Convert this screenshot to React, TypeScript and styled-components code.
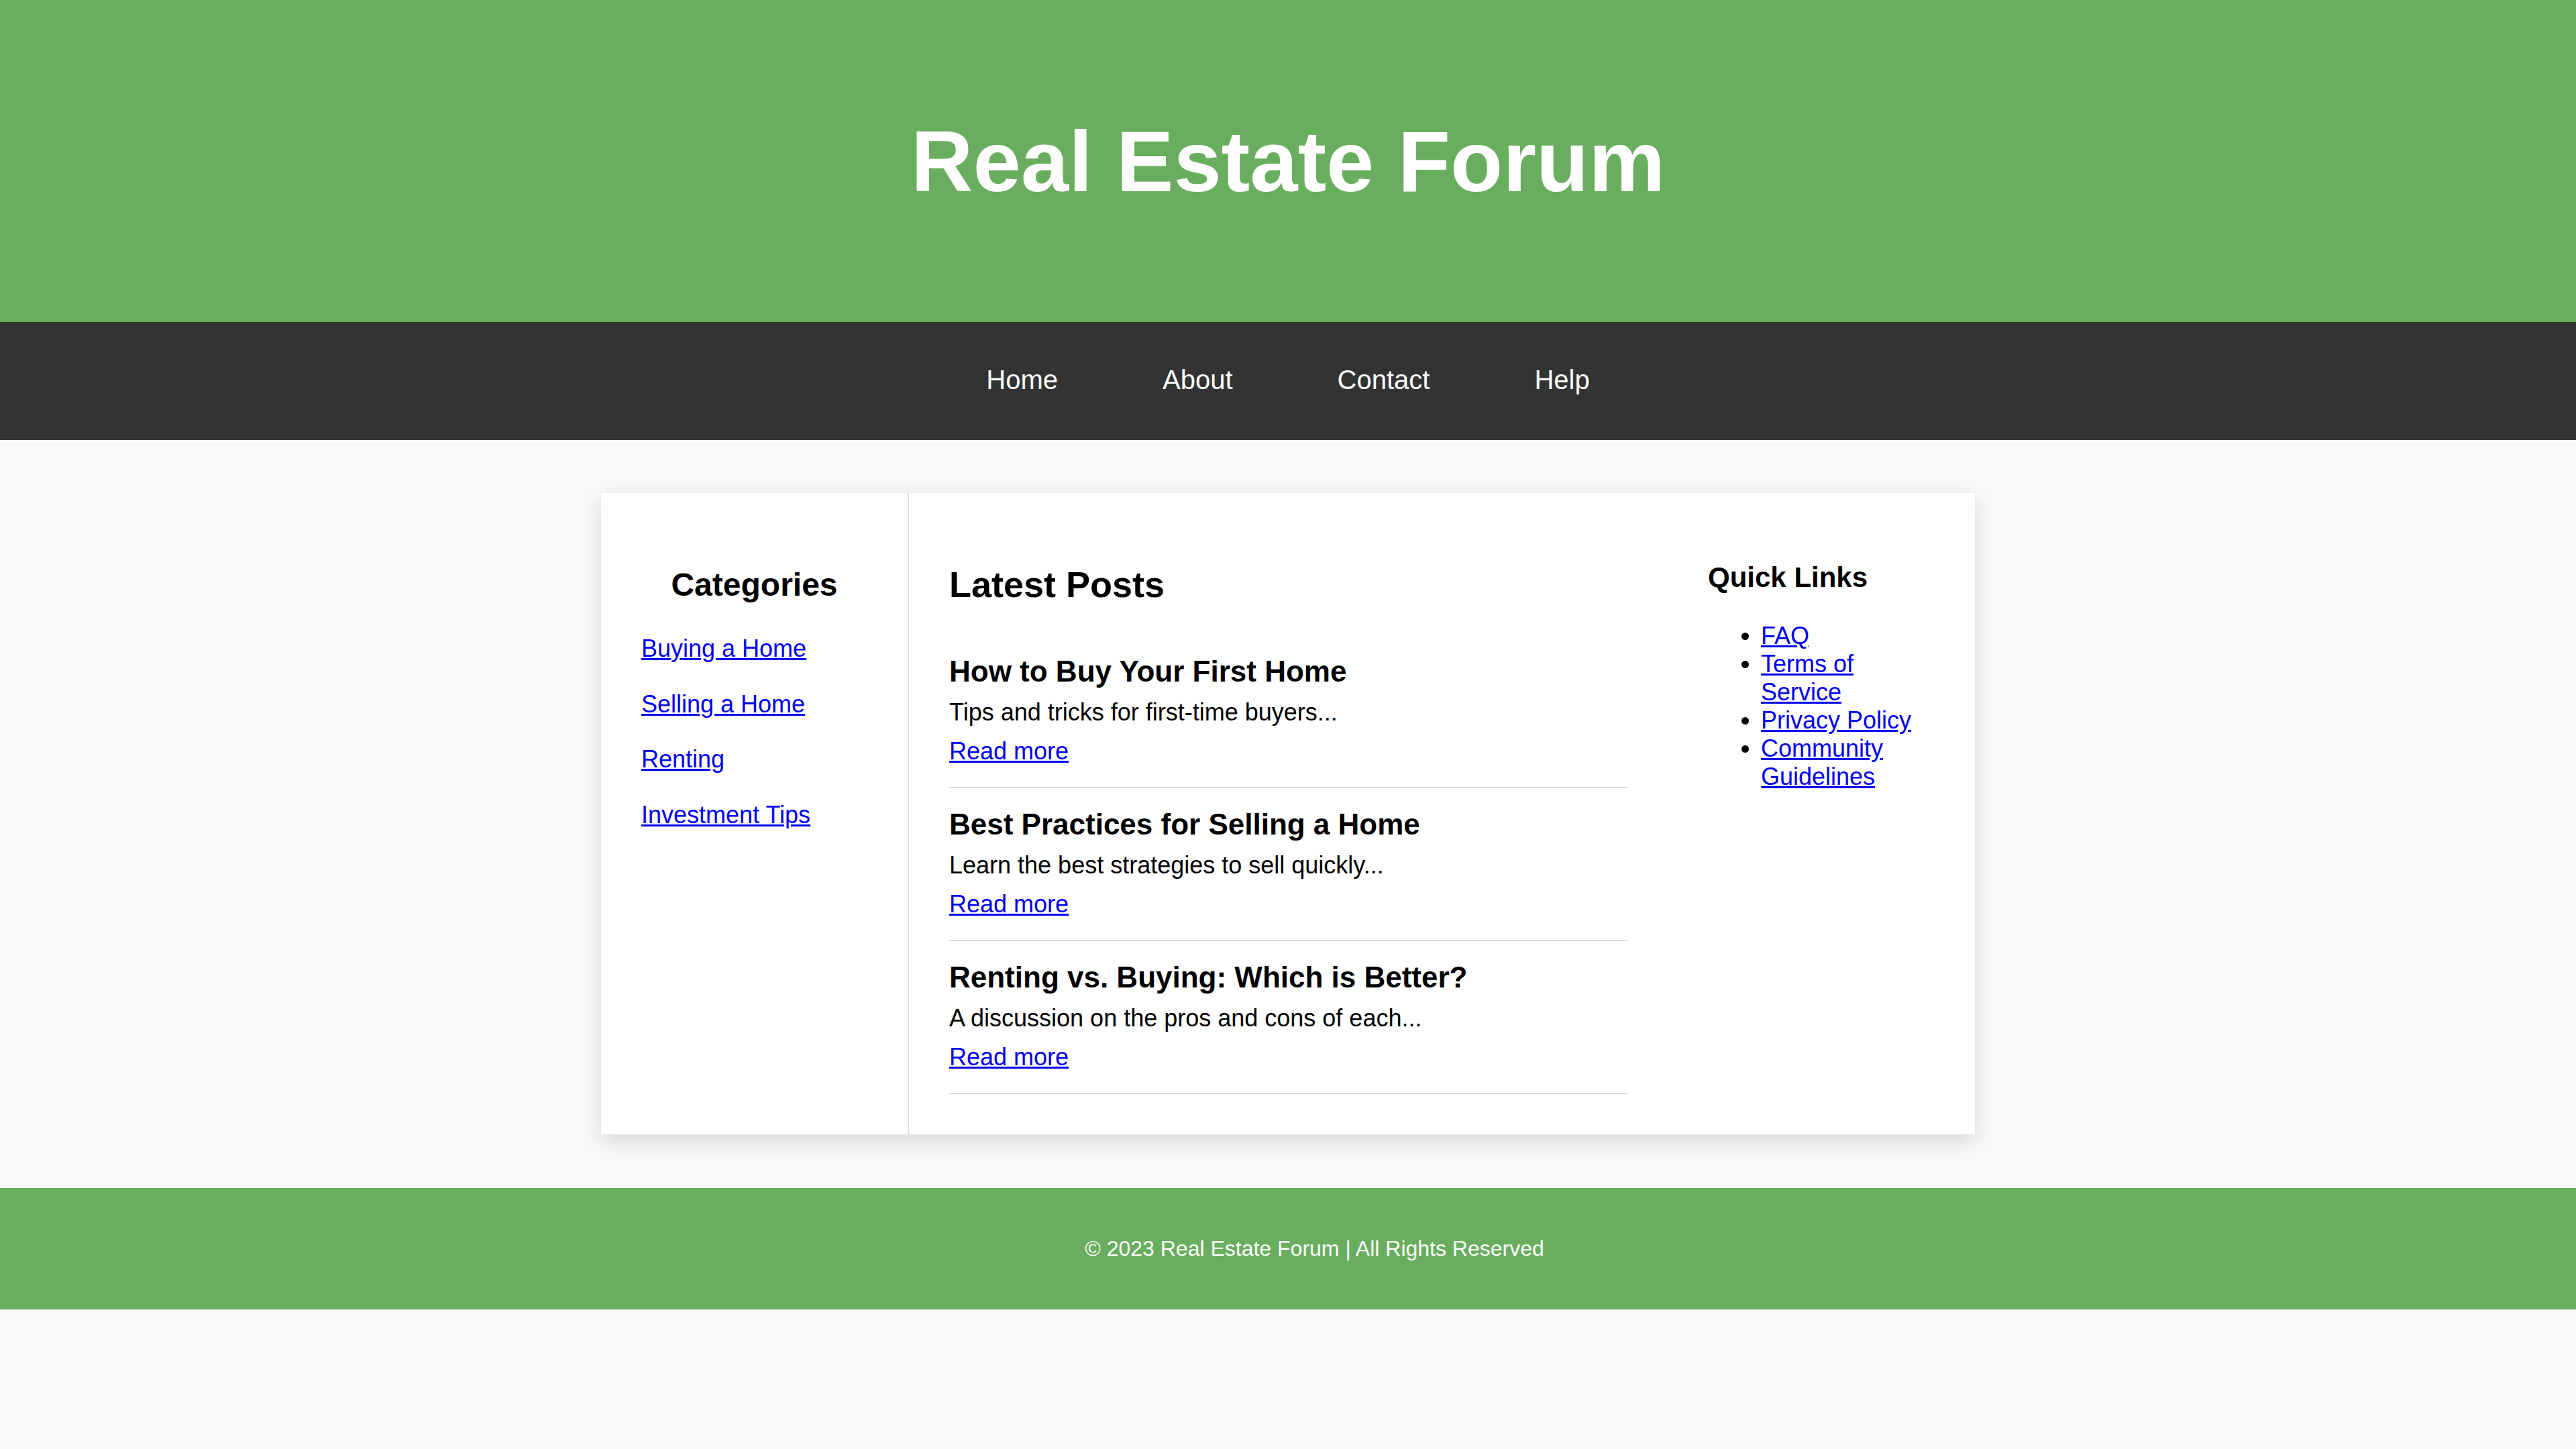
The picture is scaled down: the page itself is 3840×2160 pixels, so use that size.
import React from 'react';
import styled, { createGlobalStyle } from 'styled-components';

const GlobalStyle = createGlobalStyle`
  html, body {
    margin: 0;
    padding: 0;
    background: #f8f8f8;
  }
  body {
    font-family: "Liberation Sans", Arial, Helvetica, sans-serif;
    color: #000;
  }
  * { box-sizing: border-box; }
`;

const Header = styled.header`
  background: #69ae5e;
  height: 480px;
  display: flex;
  align-items: center;
  justify-content: center;
`;

const SiteTitle = styled.h1`
  margin: 0;
  color: #fff;
  font-size: 128px;
  font-weight: 700;
  line-height: normal;
`;

const Nav = styled.nav`
  background: #333;
  padding: 63px 0 67px;
  display: flex;
  justify-content: center;
  gap: 156px;
`;

const NavLink = styled.a`
  color: #fff;
  text-decoration: none;
  font-size: 40px;
  line-height: 46px;
`;

const Main = styled.main`
  padding: 79px 0 80px;
`;

const Card = styled.div`
  width: 2048px;
  margin: 0 auto;
  background: #fff;
  display: flex;
  box-shadow: 0 10px 28px rgba(0, 0, 0, 0.13);
`;

const Sidebar = styled.aside`
  width: 459px;
  flex-shrink: 0;
  border-right: 2px solid #ddd;
  padding: 109px 60px 60px;
`;

const SidebarTitle = styled.h3`
  margin: 0 0 46.8px;
  font-size: 48px;
  font-weight: 700;
  line-height: normal;
  text-align: center;
`;

const CategoryList = styled.ul`
  list-style: none;
  margin: 0;
  padding: 0;
`;

const CategoryItem = styled.li`
  font-size: 36px;
  line-height: normal;
  margin-bottom: 40.8px;
`;

const Link = styled.a`
  color: #0000ee;
  text-decoration: underline;
`;

const Content = styled.section`
  flex: 1;
  min-width: 0;
  padding: 60px;
`;

const ContentTitle = styled.h2`
  margin: 44.5px 0 45px;
  font-size: 54px;
  font-weight: 700;
  line-height: normal;
`;

const Post = styled.article`
  display: flex;
  flex-direction: column;
  align-items: flex-start;
  padding: 29px 0 32px;
  border-bottom: 2px solid #ddd;
`;

const PostTitle = styled.h3`
  margin: 0 0 15px;
  font-size: 44px;
  font-weight: 700;
  line-height: normal;
`;

const PostExcerpt = styled.p`
  margin: 0 0 16px;
  font-size: 36px;
  line-height: normal;
`;

const ReadMore = styled.a`
  color: #0000ee;
  text-decoration: underline;
  font-size: 36px;
  line-height: normal;
`;

const RightColumn = styled.aside`
  width: 458px;
  flex-shrink: 0;
  padding: 60px;
`;

const QuickTitle = styled.h3`
  margin: 42px 0 42px;
  font-size: 42px;
  font-weight: 700;
  line-height: normal;
`;

const QuickList = styled.ul`
  margin: 0;
  padding-left: 79px;
  list-style: disc;
`;

const QuickItem = styled.li`
  font-size: 36px;
  line-height: normal;
`;

const Footer = styled.footer`
  background: #69ae5e;
  color: #fff;
  text-align: center;
  padding: 72px 0 72px 79px;
  font-size: 32px;
  line-height: normal;
`;

const categories = ['Buying a Home', 'Selling a Home', 'Renting', 'Investment Tips'];

const posts = [
  { title: 'How to Buy Your First Home', excerpt: 'Tips and tricks for first-time buyers...' },
  { title: 'Best Practices for Selling a Home', excerpt: 'Learn the best strategies to sell quickly...' },
  { title: 'Renting vs. Buying: Which is Better?', excerpt: 'A discussion on the pros and cons of each...' },
];

const quickLinks = ['FAQ', 'Terms of Service', 'Privacy Policy', 'Community Guidelines'];

export default function App() {
  return (
    <>
      <GlobalStyle />
      <Header>
        <SiteTitle>Real Estate Forum</SiteTitle>
      </Header>
      <Nav>
        <NavLink href="#">Home</NavLink>
        <NavLink href="#">About</NavLink>
        <NavLink href="#">Contact</NavLink>
        <NavLink href="#">Help</NavLink>
      </Nav>
      <Main>
        <Card>
          <Sidebar>
            <SidebarTitle>Categories</SidebarTitle>
            <CategoryList>
              {categories.map((c) => (
                <CategoryItem key={c}>
                  <Link href="#">{c}</Link>
                </CategoryItem>
              ))}
            </CategoryList>
          </Sidebar>
          <Content>
            <ContentTitle>Latest Posts</ContentTitle>
            {posts.map((p) => (
              <Post key={p.title}>
                <PostTitle>{p.title}</PostTitle>
                <PostExcerpt>{p.excerpt}</PostExcerpt>
                <ReadMore href="#">Read more</ReadMore>
              </Post>
            ))}
          </Content>
          <RightColumn>
            <QuickTitle>Quick Links</QuickTitle>
            <QuickList>
              {quickLinks.map((l) => (
                <QuickItem key={l}>
                  <Link href="#">{l}</Link>
                </QuickItem>
              ))}
            </QuickList>
          </RightColumn>
        </Card>
      </Main>
      <Footer>© 2023 Real Estate Forum | All Rights Reserved</Footer>
    </>
  );
}
